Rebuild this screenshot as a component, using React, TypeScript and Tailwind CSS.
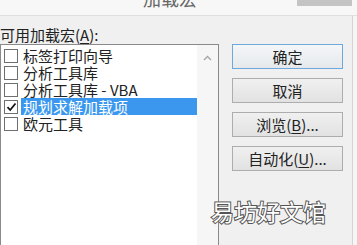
// 加载宏 dialog — Excel add-ins picker, cropped

const items = [
  { label: "标签打印向导", checked: false },
  { label: "分析工具库", checked: false },
  { label: "分析工具库 - VBA", checked: false },
  { label: "规划求解加载项", checked: true, selected: true },
  { label: "欧元工具", checked: false },
];

const font = "font-['Noto_Sans_CJK_SC','Noto_Sans',sans-serif]";

function Checkbox({ checked }: { checked: boolean }) {
  return (
    <div className="w-[14px] h-[14px] shrink-0 border border-[#6f6f6f] bg-white flex items-center justify-center">
      {checked && (
        <svg width="11" height="10" viewBox="0 0 11 10" fill="none">
          <path d="M1.5 5.2 4.2 8 9.5 1.5" stroke="#111" strokeWidth="1.8" />
        </svg>
      )}
    </div>
  );
}

function Button({ children, primary }: { children: React.ReactNode; primary?: boolean }) {
  return (
    <div
      className={`h-[25px] w-[111px] flex items-center justify-center text-[15px] leading-none text-[#222] ${
        primary
          ? "border border-[#6fa8dc] bg-gradient-to-b from-[#f4f6f8] to-[#e6e9ec]"
          : "border border-[#adadad] bg-gradient-to-b from-[#f0f0f0] to-[#e2e2e2]"
      }`}
    >
      {children}
    </div>
  );
}

export default function App() {
  return (
    <div className={`relative w-[357px] h-[245px] overflow-hidden bg-[#f5f5f5] ${font}`}>
      {/* Title bar, top cut off */}
      <div className="h-[16px] flex border-b border-[#e0e0e0] bg-[#f7f7f7] overflow-hidden">
        <span className="ml-[143px] -mt-[11px] text-[18px] leading-[18px] text-[#666]">加载宏</span>
        <div className="ml-auto mr-[5px] w-[55px] h-[6px] bg-[#c4c4c4]" />
      </div>

      {/* Dialog body */}
      <div className="w-[353px] h-[229px] flex bg-[#f0f0f0] border-r border-[#d4d4d4]">
        <div className="w-[219px] flex flex-col">
          <div className="pt-[9px] leading-[19px] text-[15px] text-[#222] whitespace-nowrap">
            可用加载宏(<span className="underline underline-offset-2">A</span>):
          </div>
          <div className="flex-1 flex border border-[#8a8a8a] border-b-0 bg-white">
            <div className="flex-1 flex flex-col pt-[2px]">
              {items.map((it) => (
                <div key={it.label} className="h-[17px] flex items-center">
                  <div className="pl-[3px] pr-[3px]">
                    <Checkbox checked={it.checked} />
                  </div>
                  <div
                    className={`flex-1 h-[17px] pl-[2px] text-[15px] leading-[17px] whitespace-nowrap ${
                      it.selected ? "bg-[#3b97ee] text-white" : "text-[#222]"
                    }`}
                  >
                    {it.label}
                  </div>
                </div>
              ))}
            </div>
            <div className="w-[21px] bg-[#f6f6f6] flex justify-center pt-[10px]">
              <svg width="9" height="6" viewBox="0 0 9 6" fill="none">
                <path d="M1 5 4.5 1.5 8 5" stroke="#a6a6a6" strokeWidth="1.4" />
              </svg>
            </div>
          </div>
        </div>

        <div className="ml-[13px] pt-[28px] flex flex-col gap-[9px]">
          <Button primary>确定</Button>
          <Button>取消</Button>
          <Button>
            浏览(<span className="underline underline-offset-2">B</span>)...
          </Button>
          <Button>
            自动化(<span className="underline underline-offset-2">U</span>)...
          </Button>
        </div>
      </div>

      {/* Watermark */}
      <div className="absolute left-[211px] top-[197px] text-[23px] leading-[28px] text-white [-webkit-text-stroke:2px_#555] [paint-order:stroke_fill] whitespace-nowrap">
        易坊好文馆
      </div>
    </div>
  );
}
